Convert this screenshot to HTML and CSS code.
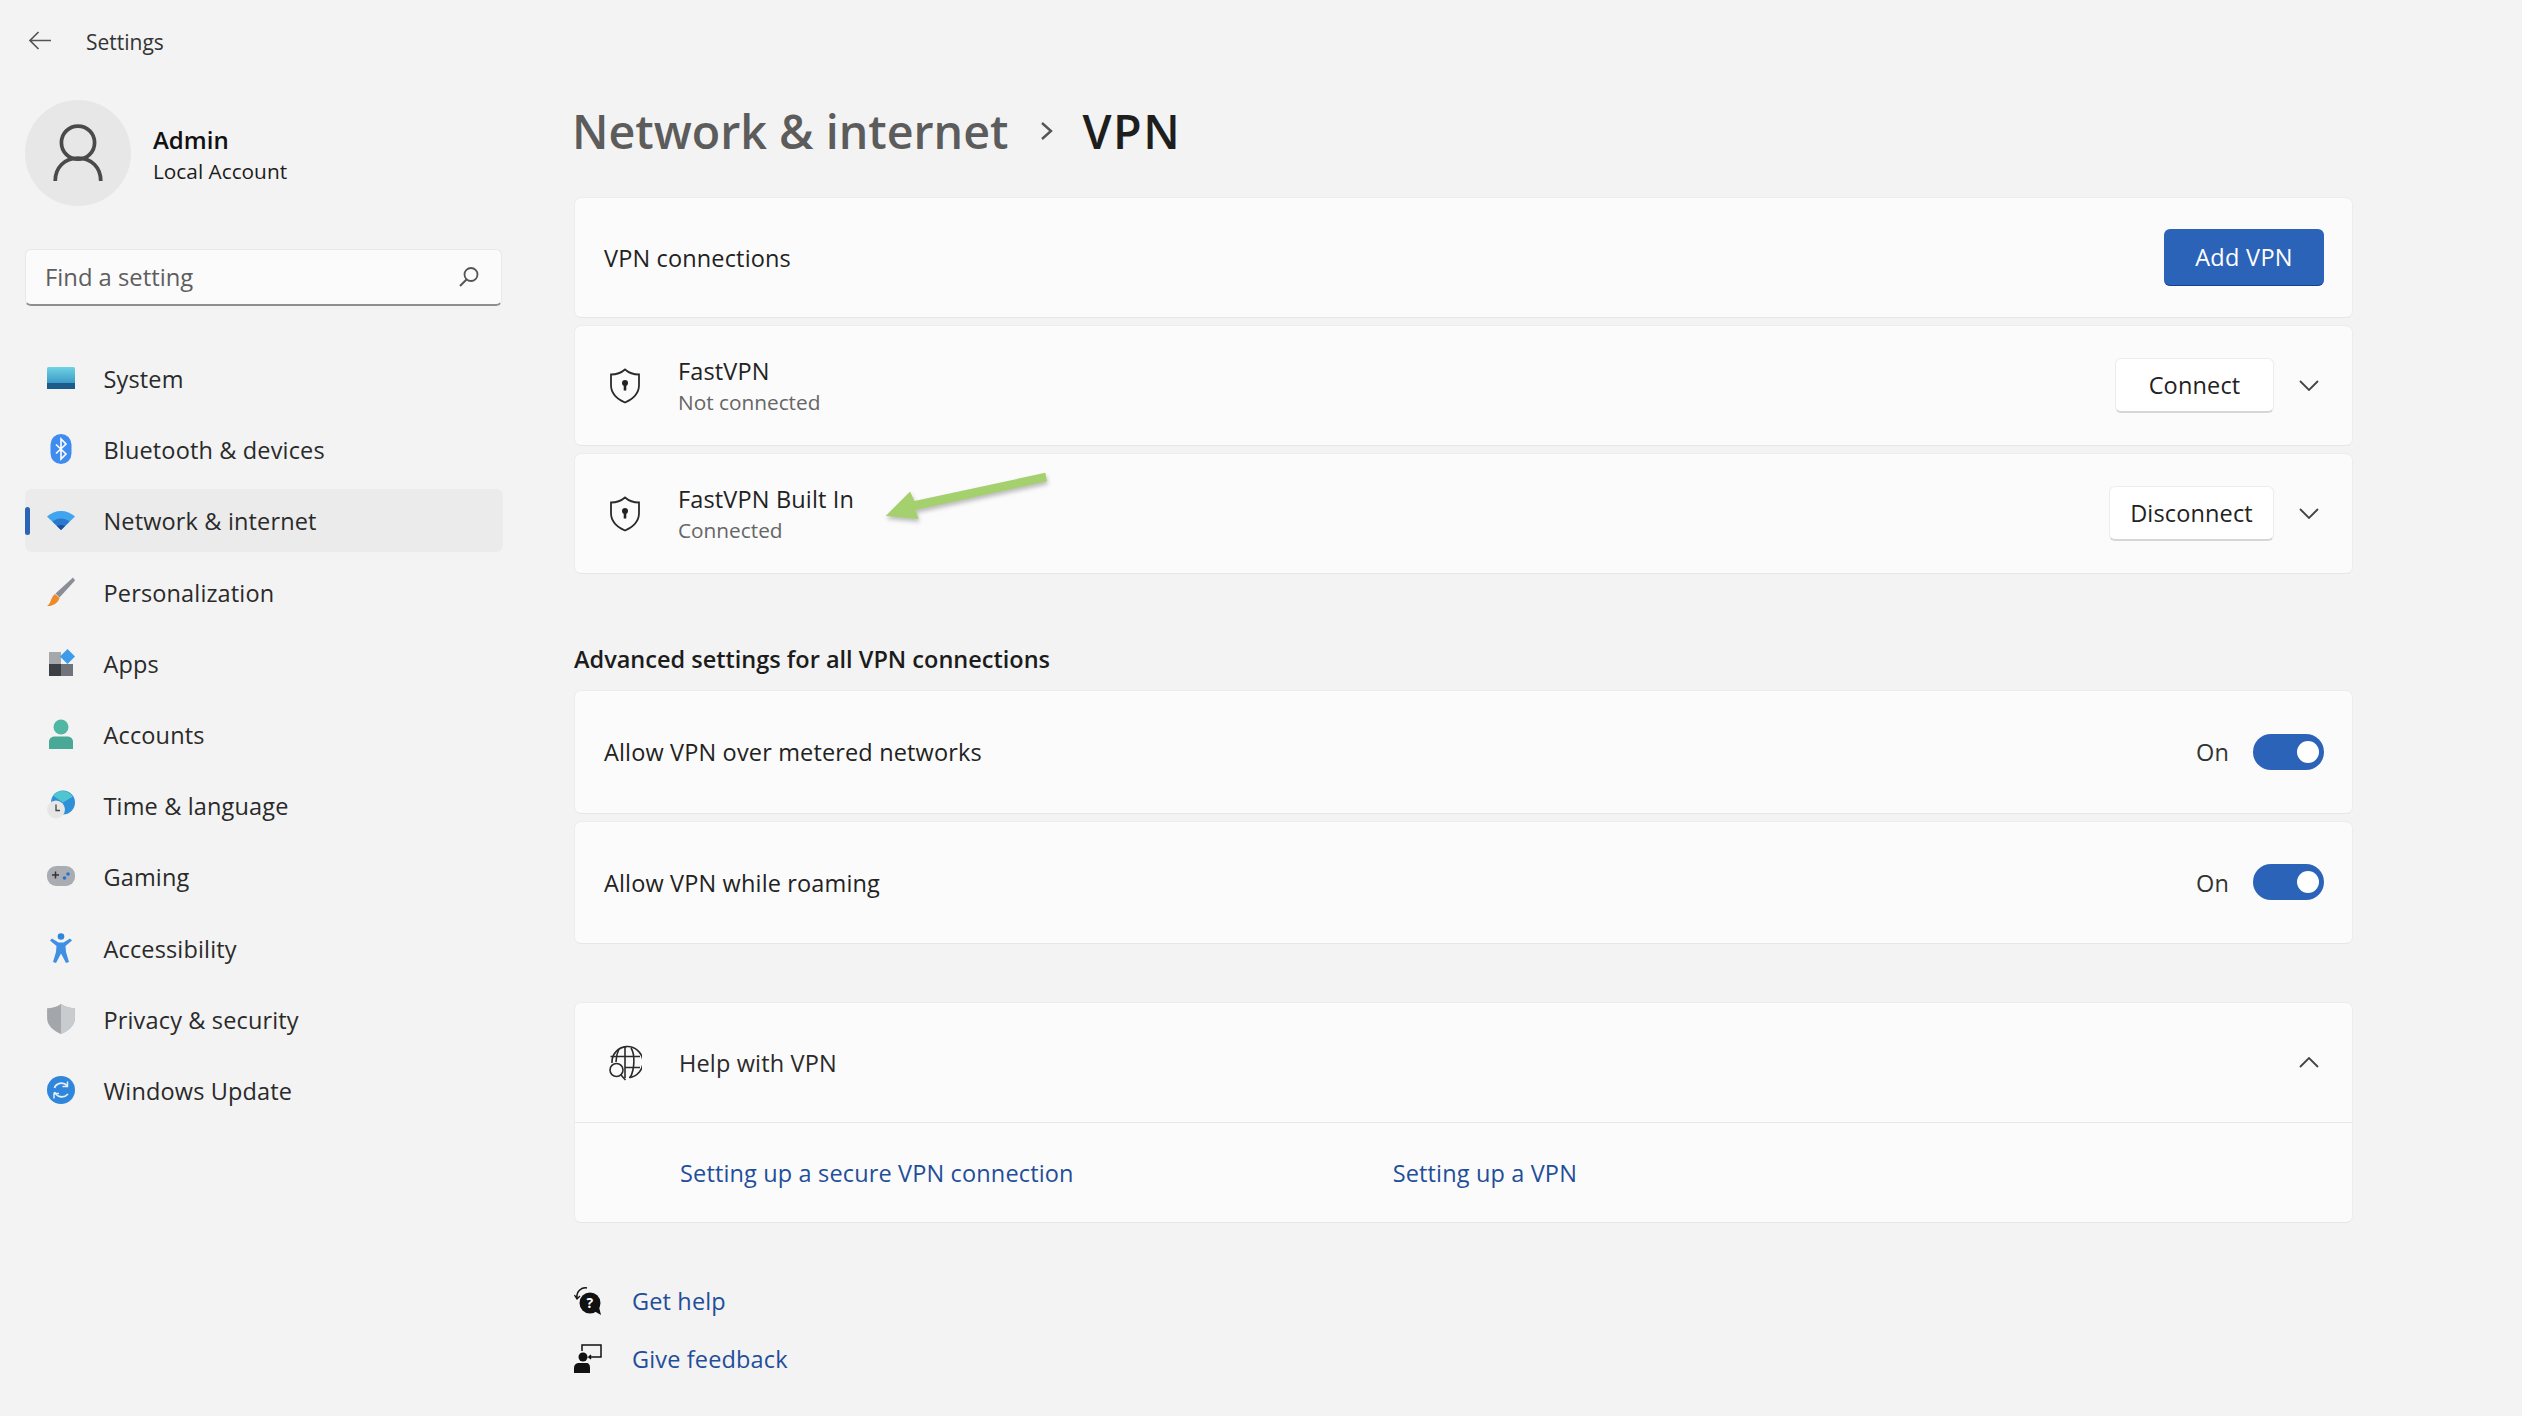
FILE: index.html
```html
<!DOCTYPE html>
<html lang="en">
<head>
<meta charset="utf-8">
<title>Settings</title>
<link rel="stylesheet" href="styles.css">
</head>
<body>
<div class="app">
  <aside class="sidebar">
    <div class="titlebar">
      <svg class="back" viewBox="0 0 24 20"><path d="M23 9.5H2M10.500 1 2 9.500 10.500 18" fill="none" stroke="#555" stroke-width="1.700"/></svg>
      <span class="app-name">Settings</span>
    </div>
    <div class="user">
      <div class="avatar"><svg viewBox="0 0 50 56" class="avatar-icon"><circle cx="25" cy="18" r="16" fill="none" stroke="#4a4a4a" stroke-width="3.600"/><path d="M3 55C3 42 12 33 25 33S47 42 47 55" fill="none" stroke="#4a4a4a" stroke-width="3.600"/></svg></div>
      <div class="user-text"><div class="user-name">Admin</div><div class="user-kind">Local Account</div></div>
    </div>
    <div class="search">
      <span>Find a setting</span>
      <svg class="search-icon" viewBox="0 0 22 22"><circle cx="13" cy="8.500" r="6.500" fill="none" stroke="#555" stroke-width="1.800"/><path d="M8.500 13.500 2 20" stroke="#555" stroke-width="2" fill="none"/></svg>
    </div>
    <nav class="nav">
      <a class="nav-item"><svg class="nav-icon" viewBox="0 0 28 22"><defs><linearGradient id="sys" x1="0" y1="0" x2="0" y2="1"><stop offset="0" stop-color="#6fd3e3"/><stop offset="1" stop-color="#2a86bd"/></linearGradient></defs><rect x="0" y="0" width="28" height="22" rx="1.500" fill="url(#sys)"/><rect x="0" y="16" width="28" height="6" fill="#1d5c8a"/></svg>System</a>
      <a class="nav-item"><svg class="nav-icon" viewBox="0 0 28 30"><rect x="3.500" y="0" width="21" height="30" rx="10.500" fill="#3f8cf0"/><path d="M9 10.500 19 20 14 25V5L19 10 9 19.500" fill="none" stroke="#fff" stroke-width="1.600"/></svg>Bluetooth &amp; devices</a>
      <a class="nav-item selected"><svg class="nav-icon" viewBox="0 0 28 20"><path d="M0 6.500C8 -1 20 -1 28 6.500L14 20Z" fill="#40a4ee"/><path d="M5.500 11.500C10.500 7.500 17.500 7.500 22.500 11.500L14 20Z" fill="#2b79cd"/><path d="M10 16C12.500 14.500 15.500 14.500 18 16L14 20Z" fill="#1c4f9c"/></svg>Network &amp; internet</a>
      <a class="nav-item"><svg class="nav-icon" viewBox="0 0 28 29"><path d="M26 0 28 3 12.500 20 8.500 16Z" fill="#8a8f96"/><path d="M8 16.500 12.500 20.500C11 26 5 29 0 28.500 4 26.500 3.500 20 8 16.500Z" fill="#ee8a2a"/></svg>Personalization</a>
      <a class="nav-item"><svg class="nav-icon" viewBox="0 0 28 28"><rect x="2" y="3" width="12" height="12" fill="#a4a8ad"/><rect x="2" y="15" width="12" height="12" fill="#3c3f44"/><rect x="14" y="15" width="12" height="12" fill="#70747a"/><path d="M20.500 0 28 7.500 20.500 15 13 7.500Z" fill="#3d9be9"/></svg>Apps</a>
      <a class="nav-item"><svg class="nav-icon" viewBox="0 0 28 30"><circle cx="14" cy="8" r="7.500" fill="#4fb7a3"/><path d="M2 30V23C2 19 5 17.500 8 17.500H20C23 17.500 26 19 26 23V30Z" fill="#48a996"/></svg>Accounts</a>
      <a class="nav-item"><svg class="nav-icon" viewBox="0 0 28 29"><circle cx="16" cy="12" r="12" fill="#2f8fd8"/><path d="M6 5C9 0 20 -2 26 6L16 12Z" fill="#4fc5cf"/><circle cx="9" cy="19" r="9" fill="#e6e6e6"/><path d="M9 14V20H13" fill="none" stroke="#444" stroke-width="1.300"/></svg>Time &amp; language</a>
      <a class="nav-item"><svg class="nav-icon" viewBox="0 0 28 20"><rect x="0" y="0" width="28" height="20" rx="9" fill="#a9adb2"/><path d="M5 9H12M8.500 5.500V12.500" stroke="#333" stroke-width="1.500"/><circle cx="21" cy="8" r="1.800" fill="#2b72d0"/><circle cx="17.500" cy="12" r="1.800" fill="#2b72d0"/></svg>Gaming</a>
      <a class="nav-item"><svg class="nav-icon" viewBox="0 0 24 30"><circle cx="12" cy="3.500" r="3.300" fill="#2f84dc"/><path d="M1 7.500 3 5.500 9.500 9.500H14.500L21 5.500 23 7.500 16.500 13 17 19 20 29 17 30 12 20.500 7 30 4 29 7 19 7.500 13Z" fill="#3f8fe3"/></svg>Accessibility</a>
      <a class="nav-item"><svg class="nav-icon" viewBox="0 0 26 28"><path d="M13 0C17 3 22 4 26 4V13C26 20 20 25 13 28 6 25 0 20 0 13V4C4 4 9 3 13 0Z" fill="#a3a7ac"/><path d="M13 0C17 3 22 4 26 4V13C26 20 20 25 13 28Z" fill="#c9cccf"/></svg>Privacy &amp; security</a>
      <a class="nav-item"><svg class="nav-icon" viewBox="0 0 28 28"><circle cx="14" cy="14" r="14" fill="#2f86db"/><path d="M7.500 12C9 7 16 5.500 20 9.500M7.500 16C10 21.500 17 22.500 21 18" fill="none" stroke="#e4f0fb" stroke-width="1.800"/><path d="M20.500 5.500V10.500H15.500M7 22.500V17.500H12" fill="none" stroke="#e4f0fb" stroke-width="1.500"/></svg>Windows Update</a>
    </nav>
  </aside>
  <main class="main">
    <h1 class="heading"><span class="crumb">Network &amp; internet</span><svg class="crumb-sep" viewBox="0 0 13 20"><path d="M2 2 11 10 2 18" fill="none" stroke="#555" stroke-width="2.400"/></svg><span class="crumb-current">VPN</span></h1>
    <section class="group">
      <div class="card row-a">
        <span class="row-label">VPN connections</span>
        <button class="btn-primary">Add VPN</button>
      </div>
      <div class="card row-b">
        <svg class="shield" viewBox="0 0 30 36"><path d="M15 1.500C19 5 24 6.500 29 6.500V17C29 25 23 31 15 34.500 7 31 1 25 1 17V6.500C6 6.500 11 5 15 1.500Z" fill="none" stroke="#2b2b2b" stroke-width="1.800"/><circle cx="15" cy="15" r="3" fill="#222"/><rect x="13.700" y="15" width="2.600" height="7.500" fill="#222"/></svg>
        <div class="row-text"><div class="row-title">FastVPN</div><div class="row-sub">Not connected</div></div>
        <button class="btn">Connect</button>
        <svg class="chev" viewBox="0 0 20 11"><path d="M1 1 10 10 19 1" fill="none" stroke="#444" stroke-width="1.800"/></svg>
      </div>
      <div class="card row-b">
        <svg class="shield" viewBox="0 0 30 36"><path d="M15 1.500C19 5 24 6.500 29 6.500V17C29 25 23 31 15 34.500 7 31 1 25 1 17V6.500C6 6.500 11 5 15 1.500Z" fill="none" stroke="#2b2b2b" stroke-width="1.800"/><circle cx="15" cy="15" r="3" fill="#222"/><rect x="13.700" y="15" width="2.600" height="7.500" fill="#222"/></svg>
        <div class="row-text"><div class="row-title">FastVPN Built In</div><div class="row-sub">Connected</div></div>
        <button class="btn btn-wide">Disconnect</button>
        <svg class="chev" viewBox="0 0 20 11"><path d="M1 1 10 10 19 1" fill="none" stroke="#444" stroke-width="1.800"/></svg>
      </div>
    </section>
    <h2 class="section-title">Advanced settings for all VPN connections</h2>
    <section class="group">
      <div class="card row-c">
        <span class="row-label">Allow VPN over metered networks</span>
        <span class="toggle-label">On</span><span class="toggle"></span>
      </div>
      <div class="card row-c">
        <span class="row-label">Allow VPN while roaming</span>
        <span class="toggle-label">On</span><span class="toggle"></span>
      </div>
    </section>
    <section class="card help">
      <div class="help-head">
        <svg class="help-icon" viewBox="0 0 34 36"><g fill="none" stroke="#2b2b2b" stroke-width="1.600"><path d="M4 18A15.500 15.500 0 1 1 21 32.500"/><path d="M11 4C9 8 8 12 8 17M17 1.500V33M23 3C27 9 27 24 22 33M2.500 11.500H32M17 22.500H32"/><circle cx="8.500" cy="25" r="6.500"/><path d="M13 30 17.500 35"/></g></svg>
        <span class="help-title">Help with VPN</span>
        <svg class="chev" viewBox="0 0 20 11"><path d="M1 10 10 1 19 10" fill="none" stroke="#444" stroke-width="1.800"/></svg>
      </div>
      <div class="help-links"><a class="link">Setting up a secure VPN connection</a><a class="link">Setting up a VPN</a></div>
    </section>
    <footer class="foot">
      <div class="foot-row"><svg class="foot-icon" viewBox="0 0 28 30"><path d="M3 12C2 5 8 1 13 2" fill="none" stroke="#111" stroke-width="1.500"/><path d="M0.500 9 3 13 6 10" fill="none" stroke="#111" stroke-width="1.300"/><circle cx="16" cy="17" r="10.500" fill="#111"/><path d="M20 25 27 29 25 21Z" fill="#111"/><text class="foot-q" x="16" y="22">?</text></svg><a class="link">Get help</a></div>
      <div class="foot-row"><svg class="foot-icon" viewBox="0 0 28 30"><circle cx="9" cy="13" r="4.500" fill="#111"/><path d="M0 29V24C0 20 3 19 5 19H12C15 19 16 21 16 24V29Z" fill="#111"/><path d="M8 7V1H27V13H15L17 11M15 13 17 15" fill="none" stroke="#111" stroke-width="1.500"/></svg><a class="link">Give feedback</a></div>
    </footer>
    <svg class="annotation" viewBox="0 0 170 60"><path d="M160 3.500 37 30 33 21 10 44 41 47 38 38.500 161.500 11.500Z" fill="#a5d06e"/></svg>
  </main>
</div>
</body>
</html>
```
FILE: styles.css
```css
* { box-sizing: border-box; }
html, body { margin: 0; height: 100%; }
body {
  background: #f3f3f3;
  color: #1b1b1b;
  font-family: "Open Sans", "Noto Sans", sans-serif;
  font-size: 23.500px;
  letter-spacing: 0.15px;
  overflow: hidden;
}
.app { display: flex; height: 1416px; width: 2522px; }
.sidebar { width: 574px; padding-left: 25px; flex: none; }
.titlebar { height: 82px; display: flex; align-items: center; padding-left: 3px; }
.back { width: 24px; height: 20px; }
.app-name { margin-left: 34px; padding-top: 2px; font-size: 21px; color: #333; letter-spacing: 0; }
.user { height: 107px; margin-top: 17px; display: flex; align-items: center; }
.avatar { width: 106px; height: 106px; border-radius: 50%; background: #e7e7e7; display: flex; align-items: center; justify-content: center; }
.avatar-icon { width: 52px; height: 58px; }
.user-text { margin-left: 22px; padding-top: 5px; }
.user-name { font-weight: 600; font-size: 24px; line-height: 32px; color: #111; letter-spacing: 0; }
.user-kind { font-size: 20.800px; line-height: 30px; color: #1c1c1c; letter-spacing: 0; }
.search {
  width: 477px; height: 57px; margin-top: 43px; padding: 0 21px 0 19px;
  display: flex; align-items: center; justify-content: space-between;
  background: #fbfbfb; border: 1px solid #e8e8e8; border-bottom: 2px solid #8f8f8f; border-radius: 6px;
  color: #5e5e5e; font-size: 23.800px; letter-spacing: 0;
}
.search-icon { width: 22px; height: 22px; }
.nav { margin-top: 41px; display: flex; flex-direction: column; gap: 8.200px; width: 478px; }
.nav-item { height: 63px; display: flex; align-items: center; position: relative; padding: 1px 0 0 22px; color: #2a2a2a; border-radius: 7px; }
.nav-icon { width: 28px; height: 30px; margin-right: 28.500px; margin-top: -2px; flex: none; }
.selected { background: #ebebeb; }
.selected::before { content: ""; position: absolute; left: 0; top: 18px; width: 5px; height: 28px; background: #2b63b8; border-radius: 3px; }
.main { position: relative; width: 1779px; padding-top: 100px; }
.heading { margin: 0 0 35px -2px; height: 62px; display: flex; align-items: center; font-size: 46.600px; font-weight: 600; color: #1e1e1e; letter-spacing: 0; }
.crumb { color: #5c5c5c; }
.crumb-sep { width: 13px; height: 20px; margin: 0 30px 0 31px; }
.crumb-current { letter-spacing: 1.500px; }
.group { display: flex; flex-direction: column; gap: 7px; }
.card { background: #fbfbfb; border: 1px solid #ececec; border-bottom-color: #e6e6e6; border-radius: 7px; }
.row-a, .row-b, .row-c { display: flex; align-items: center; padding: 0 28px 0 29px; }
.row-a { height: 121px; }
.row-b { height: 121px; padding-left: 35px; padding-right: 33px; }
.row-c { height: 123.500px; }
.row-label { flex: 1; padding-top: 1px; color: #222; }
.btn-primary { width: 160px; height: 57px; border: 0; border-bottom: 1px solid #17408a; border-radius: 6px; background: #2b63b8; color: #fff; font: inherit; letter-spacing: 0.3px; }
.shield { width: 30px; height: 36px; margin-right: 38px; flex: none; }
.row-text { flex: 1; padding-top: 1px; }
.row-title { line-height: 33px; color: #222; }
.row-sub { font-size: 20.800px; line-height: 29px; letter-spacing: 0; color: #666; }
.btn { width: 159px; height: 55px; border: 1px solid #ececec; border-bottom: 2px solid #d6d6d6; border-radius: 6px; background: #fff; color: #222; font: inherit; letter-spacing: inherit; margin-right: 25px; }
.btn-wide { width: 165px; }
.chev { width: 20px; height: 11px; flex: none; }
.toggle-label { padding-top: 1px; color: #333; margin-right: 24px; }
.toggle { width: 71px; height: 36px; border-radius: 18px; background: #2b63b8; position: relative; }
.toggle::after { content: ""; position: absolute; right: 5px; top: 7px; width: 22px; height: 22px; border-radius: 50%; background: #fff; }
.section-title { margin: 65px 0 11px; font-size: 23.500px; line-height: 40px; font-weight: 600; letter-spacing: 0; color: #1c1c1c; }
.help { margin-top: 58px; height: 221px; }
.help-head { height: 120px; display: flex; align-items: center; padding: 0 33px 0 33px; border-bottom: 1px solid #e8e8e8; }
.help-icon { width: 34px; height: 36px; margin-right: 37px; flex: none; }
.help-title { flex: 1; color: #2a2a2a; }
.help-links { height: 99px; display: flex; align-items: center; padding-left: 105px; gap: 319px; }
.link { color: #1f4e9a; }
.foot { margin-top: 49px; }
.foot-row { height: 58px; display: flex; align-items: center; }
.foot-icon { width: 28px; height: 30px; margin-right: 30px; flex: none; }
.foot-q { font-size: 14px; font-weight: 700; fill: #fff; text-anchor: middle; }
.annotation { position: absolute; left: 301px; top: 469px; width: 181px; height: 64px; filter: drop-shadow(1px 3px 2px rgba(0,0,0,.25)); }
```
